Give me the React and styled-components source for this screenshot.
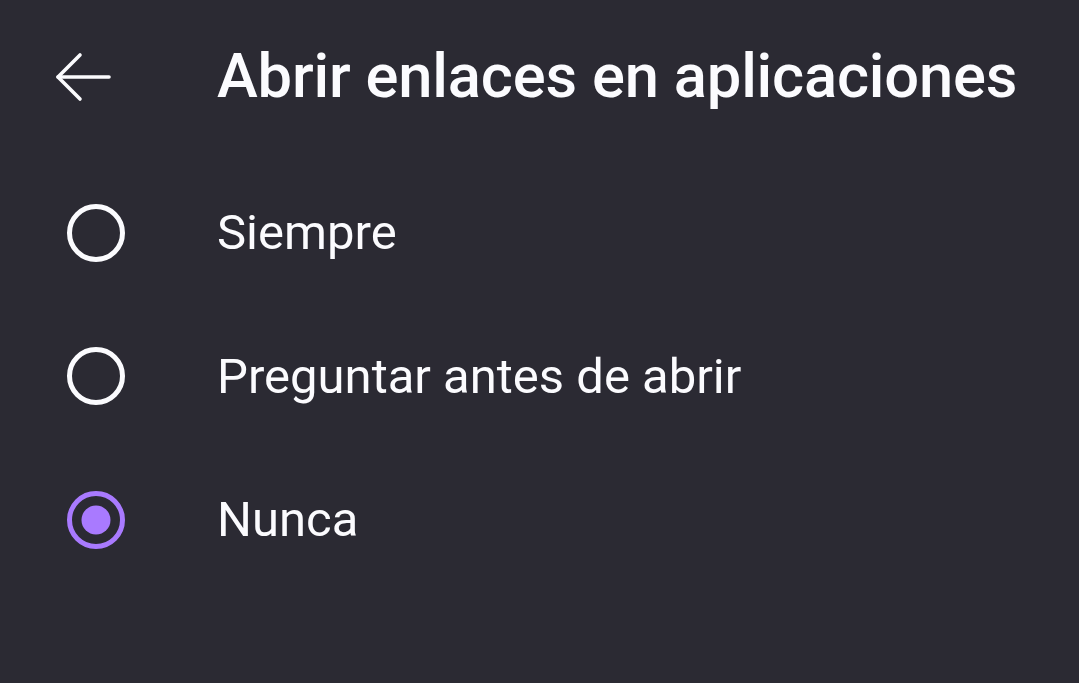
import React from "react";
import styled, { createGlobalStyle } from "styled-components";

const Global = createGlobalStyle`
  html, body { margin: 0; padding: 0; background: #2b2a33; }
  body { font-family: Roboto, "Noto Sans", sans-serif; color: #fbfbfe; }
`;

const Page = styled.div`
  width: 1079px;
  height: 683px;
  background: #2b2a33;
  overflow: hidden;
`;

const Header = styled.div`
  height: 154px;
  display: flex;
  align-items: center;
  padding-left: 55px;
`;

const BackButton = styled.div`
  width: 58px;
  height: 52px;
  display: flex;
  align-items: center;
  justify-content: center;
`;

const Title = styled.h1`
  margin: 0 0 0 104px;
  font-size: 61.5px;
  font-weight: 500;
  letter-spacing: -0.2px;
  line-height: 1;
  color: #fbfbfe;
  white-space: nowrap;
`;

const List = styled.div`
  padding-top: 7px;
  display: flex;
  flex-direction: column;
`;

const Row = styled.div`
  height: 143.5px;
  display: flex;
  align-items: center;
  padding-left: 64px;
`;

const Radio = styled.div`
  width: 64px;
  height: 64px;
  display: flex;
  align-items: center;
  justify-content: center;
  flex-shrink: 0;
`;

const Label = styled.span`
  margin-left: 89px;
  font-size: 49px;
  font-weight: 400;
  letter-spacing: 0;
  line-height: 1;
  color: #fbfbfe;
  white-space: nowrap;
`;

const RadioIcon = ({ checked }) => {
  const color = checked ? "#a97aff" : "#fbfbfe";
  return (
    <svg width="64" height="64" viewBox="0 0 64 64">
      <circle cx="32" cy="32" r="26.5" fill="none" stroke={color} strokeWidth="5" />
      {checked && <circle cx="32" cy="32" r="14.5" fill={color} />}
    </svg>
  );
};

const BackArrow = () => (
  <svg width="58" height="52" viewBox="0 0 58 52">
    <g fill="none" stroke="#fbfbfe" strokeWidth="3.6" strokeLinecap="round" strokeLinejoin="round">
      <line x1="3" y1="26" x2="54" y2="26" />
      <polyline points="25,4 3,26 25,48" />
    </g>
  </svg>
);

const options = [
  { label: "Siempre", checked: false },
  { label: "Preguntar antes de abrir", checked: false },
  { label: "Nunca", checked: true },
];

export default function App() {
  return (
    <Page>
      <Global />
      <Header>
        <BackButton>
          <BackArrow />
        </BackButton>
        <Title>Abrir enlaces en aplicaciones</Title>
      </Header>
      <List>
        {options.map((o) => (
          <Row key={o.label}>
            <Radio>
              <RadioIcon checked={o.checked} />
            </Radio>
            <Label>{o.label}</Label>
          </Row>
        ))}
      </List>
    </Page>
  );
}
